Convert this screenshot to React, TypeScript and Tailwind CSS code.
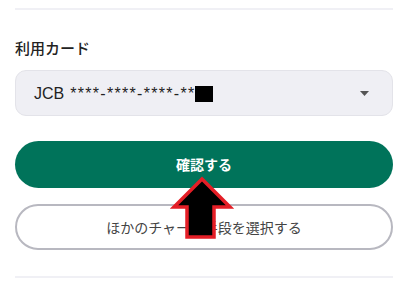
export default function App() {
  return (
    <div
      className="relative h-[286px] w-[408px] overflow-hidden bg-white px-[15px]"
      style={{ fontFamily: '"Noto Sans", "Noto Sans CJK JP", sans-serif' }}
    >
      <div className="mt-[8px] h-[2px] bg-[#f0f0f5]" />

      <p className="mt-[27px] text-[15px] leading-[22px] font-medium text-[#222]">
        利用カード
      </p>

      <div className="mt-[11px] flex h-[46px] items-center justify-between rounded-[11px] border border-[#e3e3e9] bg-[#efeff4] pl-[18px] pr-[23px]">
        <div className="flex items-center pt-[1px] font-['Liberation_Sans',sans-serif] text-[16px] text-[#222]">
          <span>JCB</span>
          <span className="ml-[6px] tracking-[1.3px]">****-****-****-**</span>
          <span className="-ml-[1px] inline-block h-[16px] w-[18px] bg-black" />
        </div>
        <svg width="9" height="5" viewBox="0 0 9 5">
          <path d="M0 0 H9 L4.5 5 Z" fill="#555" />
        </svg>
      </div>

      <button className="mt-[25px] flex h-[47px] w-full items-center justify-center rounded-full bg-[#00735a] text-[14px] font-bold text-white">
        確認する
      </button>

      <button className="mt-[16px] flex h-[46px] w-full items-center justify-center rounded-full border-2 border-[#b8b8c0] bg-white text-[14px] text-[#444]">
        ほかのチャージ手段を選択する
      </button>

      <div className="mt-[26px] h-[2px] bg-[#f0f0f5]" />

      <svg
        className="absolute left-0 top-0"
        width="408"
        height="286"
        viewBox="0 0 408 286"
      >
        <polygon
          points="202,179 230,207 214,207 214,237 187,237 187,207 174,207"
          fill="#000"
          stroke="#e41e26"
          strokeWidth="3.5"
          strokeLinejoin="miter"
        />
      </svg>
    </div>
  );
}
